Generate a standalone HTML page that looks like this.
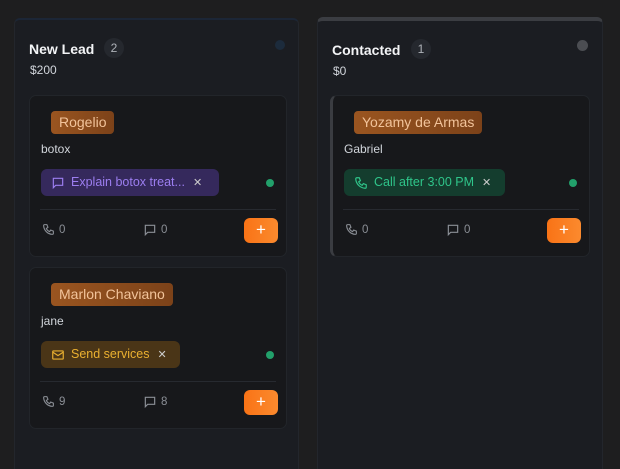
<!DOCTYPE html>
<html><head><style>
*{box-sizing:border-box;margin:0;padding:0}
html,body{width:620px;height:469px;overflow:hidden}
body{background:#1e1e1f;font-family:"Liberation Sans",sans-serif;position:relative;color:#e5e7eb}
.col{position:absolute;top:18px;height:470px;background:#1b1d22;border-radius:6px;border:1px solid #23262c}
.c1{left:14px;width:285px;border-top:2px solid #1c2636}
.c2{left:317px;width:286px;top:17px;border-top:4px solid #3b3d42}
.title{position:absolute;left:14px;top:21px;font-size:14px;font-weight:bold;color:#f3f4f6}
.cnt{position:absolute;top:18px;width:20px;height:20px;border-radius:10px;background:#25282e;color:#aeb2b8;font-size:12px;text-align:center;line-height:20px}
.amt{position:absolute;left:15px;top:43px;font-size:12px;color:#d1d5db}
.card{position:absolute;width:258px;height:162px;background:#17181b;border:1px solid #22252a;border-radius:7px}
.name{position:absolute;left:21px;top:15px;height:23px;padding:0 8px;border-radius:4px;background:linear-gradient(90deg,#9a5520,#7c4219);color:#f2c39a;font-size:14px;line-height:23px}
.sub{position:absolute;left:11px;top:46px;font-size:12px;color:#d1d5db}
.chip{position:absolute;left:11px;top:73px;height:27px;border-radius:6px;font-size:12.5px;line-height:27px;padding-left:30px}
.chip svg{position:absolute;left:10px;top:7px}
.chip .x{margin-left:8px;color:#ccc;font-size:11px}
.dot{position:absolute;left:236px;top:83px;width:8px;height:8px;border-radius:4px;background:#22a06b}
.hr{position:absolute;left:10px;right:10px;top:113px;border-top:1px solid #272a30}
.ft{position:absolute;top:127px;font-size:11.5px;color:#8b8f96;display:flex;align-items:center;gap:4px}
.plus{position:absolute;left:214px;top:122px;width:34px;height:25px;border-radius:6px;background:linear-gradient(90deg,#f97316,#fb8a2e);color:#fff;font-size:17px;text-align:center;line-height:24px}
</style></head><body>
<div class="col c1">
<div class="title">New Lead</div><div class="cnt" style="left:89px">2</div>
<div style="position:absolute;left:260px;top:20px;width:10px;height:10px;border-radius:5px;background:#1c2b3c"></div>
<div class="amt">$200</div>
</div>
<div class="col c2">
<div class="title">Contacted</div><div class="cnt" style="left:93px">1</div>
<div style="position:absolute;left:259px;top:19px;width:11px;height:11px;border-radius:6px;background:#4b4d52"></div>
<div class="amt">$0</div>
</div>

<div class="card" style="left:29px;top:95px">
<div class="name">Rogelio</div><div class="sub">botox</div>
<div class="chip" style="background:#35295c;color:#9c7ef0;width:178px"><svg width="14" height="14" viewBox="0 0 24 24" fill="none" stroke="#9c7ef0" stroke-width="2"><path d="M4 4h16v12H8l-4 4z"/></svg>Explain botox treat...<span class="x">✕</span></div>
<div class="dot"></div><div class="hr"></div>
<div class="ft" style="left:12px"><svg width="13" height="13" viewBox="0 0 24 24" fill="none" stroke="#8b8f96" stroke-width="2"><path d="M5 3h4l2 5-3 2a11 11 0 0 0 6 6l2-3 5 2v4a2 2 0 0 1-2 2A17 17 0 0 1 3 5a2 2 0 0 1 2-2z"/></svg>0</div>
<div class="ft" style="left:113px"><svg width="14" height="14" viewBox="0 0 24 24" fill="none" stroke="#8b8f96" stroke-width="2"><path d="M4 4h16v12H8l-4 4z"/></svg>0</div>
<div class="plus">+</div>
</div>

<div class="card" style="left:29px;top:267px">
<div class="name">Marlon Chaviano</div><div class="sub">jane</div>
<div class="chip" style="background:#4a3517;color:#eab030;width:139px"><svg width="14" height="14" viewBox="0 0 24 24" fill="none" stroke="#eab030" stroke-width="2"><rect x="3" y="5" width="18" height="14" rx="1"/><path d="M3 7l9 6 9-6"/></svg>Send services<span class="x">✕</span></div>
<div class="dot"></div><div class="hr"></div>
<div class="ft" style="left:12px"><svg width="13" height="13" viewBox="0 0 24 24" fill="none" stroke="#8b8f96" stroke-width="2"><path d="M5 3h4l2 5-3 2a11 11 0 0 0 6 6l2-3 5 2v4a2 2 0 0 1-2 2A17 17 0 0 1 3 5a2 2 0 0 1 2-2z"/></svg>9</div>
<div class="ft" style="left:113px"><svg width="14" height="14" viewBox="0 0 24 24" fill="none" stroke="#8b8f96" stroke-width="2"><path d="M4 4h16v12H8l-4 4z"/></svg>8</div>
<div class="plus">+</div>
</div>

<div class="card" style="left:330px;top:95px;width:260px;border-left:3px solid #3a3c41">
<div class="name">Yozamy de Armas</div><div class="sub">Gabriel</div>
<div class="chip" style="background:#143d2e;color:#2fc58a;width:161px"><svg width="14" height="14" viewBox="0 0 24 24" fill="none" stroke="#2fc58a" stroke-width="2"><path d="M5 3h4l2 5-3 2a11 11 0 0 0 6 6l2-3 5 2v4a2 2 0 0 1-2 2A17 17 0 0 1 3 5a2 2 0 0 1 2-2z"/></svg>Call after 3:00 PM<span class="x">✕</span></div>
<div class="dot"></div><div class="hr"></div>
<div class="ft" style="left:12px"><svg width="13" height="13" viewBox="0 0 24 24" fill="none" stroke="#8b8f96" stroke-width="2"><path d="M5 3h4l2 5-3 2a11 11 0 0 0 6 6l2-3 5 2v4a2 2 0 0 1-2 2A17 17 0 0 1 3 5a2 2 0 0 1 2-2z"/></svg>0</div>
<div class="ft" style="left:113px"><svg width="14" height="14" viewBox="0 0 24 24" fill="none" stroke="#8b8f96" stroke-width="2"><path d="M4 4h16v12H8l-4 4z"/></svg>0</div>
<div class="plus">+</div>
</div>
</body></html>
